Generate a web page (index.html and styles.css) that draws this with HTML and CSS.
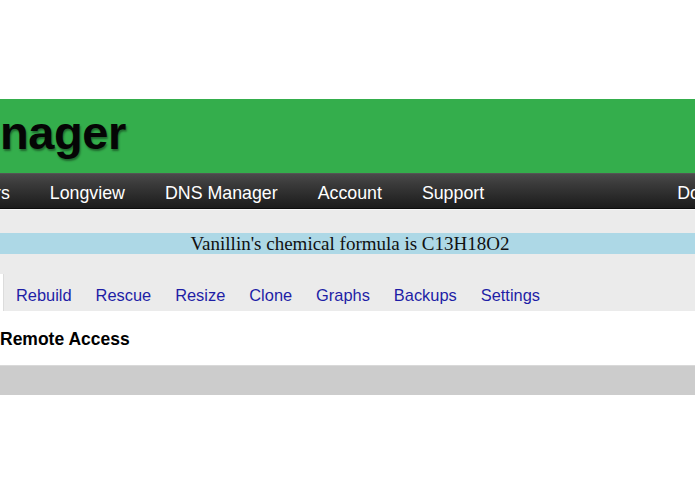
FILE: index.html
```html
<!DOCTYPE html>
<html>
<head>
<meta charset="utf-8">
<link rel="stylesheet" href="styles.css">
</head>
<body>
<div class="page">
  <header class="brand">
    <div class="logo">nager</div>
  </header>
  <nav class="mainnav">
    <a class="navitem first">rs</a>
    <a class="navitem">Longview</a>
    <a class="navitem">DNS Manager</a>
    <a class="navitem">Account</a>
    <a class="navitem">Support</a>
    <a class="navitem right">Do</a>
  </nav>
  <div class="subarea">
    <div class="notice">Vanillin's chemical formula is C13H18O2</div>
    <div class="tabs">
      <span class="tab current"></span>
      <a class="tab">Rebuild</a>
      <a class="tab">Rescue</a>
      <a class="tab">Resize</a>
      <a class="tab">Clone</a>
      <a class="tab">Graphs</a>
      <a class="tab">Backups</a>
      <a class="tab">Settings</a>
    </div>
  </div>
  <h2 class="section-title">Remote Access</h2>
  <div class="bar"></div>
</div>
</body>
</html>
```
FILE: styles.css
```css
html, body {
  margin: 0;
  padding: 0;
  background: #ffffff;
}
.page {
  width: 695px;
  overflow: hidden;
  padding-top: 99px;
  font-family: "Liberation Sans", Arial, sans-serif;
}
.brand {
  height: 74px;
  background: #34ae4c;
  box-sizing: border-box;
  padding-top: 10px;
}
.logo {
  font-size: 47px;
  line-height: 47px;
  font-weight: bold;
  letter-spacing: -0.4px;
  color: #050505;
  padding-left: 0;
  text-shadow: 1px 2px 2px rgba(0, 0, 0, 0.4);
}
.mainnav {
  display: flex;
  white-space: nowrap;
  height: 36px;
  box-sizing: border-box;
  padding-top: 4px;
  background: linear-gradient(to bottom, #4a4a4a 0%, #3a3a3a 30%, #262626 75%, #1c1c1c 100%);
  border-top: 1px solid #555555;
  border-bottom: 1px solid #0d0d0d;
  overflow: hidden;
}
.navitem {
  flex: none;
  color: #ffffff;
  font-size: 17.8px;
  line-height: 30px;
  padding: 0 20px;
}
.navitem.first {
  padding-left: 0;
  margin-left: -5px;
}
.navitem.right {
  margin-left: 153px;
}
.subarea {
  background: #ebebeb;
  border-top: 1px solid #f6f6f6;
  padding-top: 23px;
}
.notice {
  height: 21px;
  line-height: 21px;
  background: #add8e6;
  text-align: center;
  padding-left: 5px;
  font-family: "Liberation Serif", "Times New Roman", serif;
  font-size: 19px;
  color: #111111;
}
.tabs {
  display: flex;
  margin-top: 20px;
  height: 37px;
}
.tab {
  flex: none;
  font-size: 16.4px;
  line-height: 32px;
  padding: 5px 12px 0;
  color: #1e1ea6;
}
.tab.current {
  width: 3px;
  padding: 0;
  background: #ffffff;
  border-right: 1px solid #dcdcdc;
}
.section-title {
  margin: 18px 0 16px;
  font-size: 17.5px;
  line-height: 20px;
  font-weight: bold;
  color: #000000;
}
.bar {
  height: 30px;
  background: #cccccc;
  border-top: 1px solid #d9d9d9;
  box-sizing: border-box;
}
```
